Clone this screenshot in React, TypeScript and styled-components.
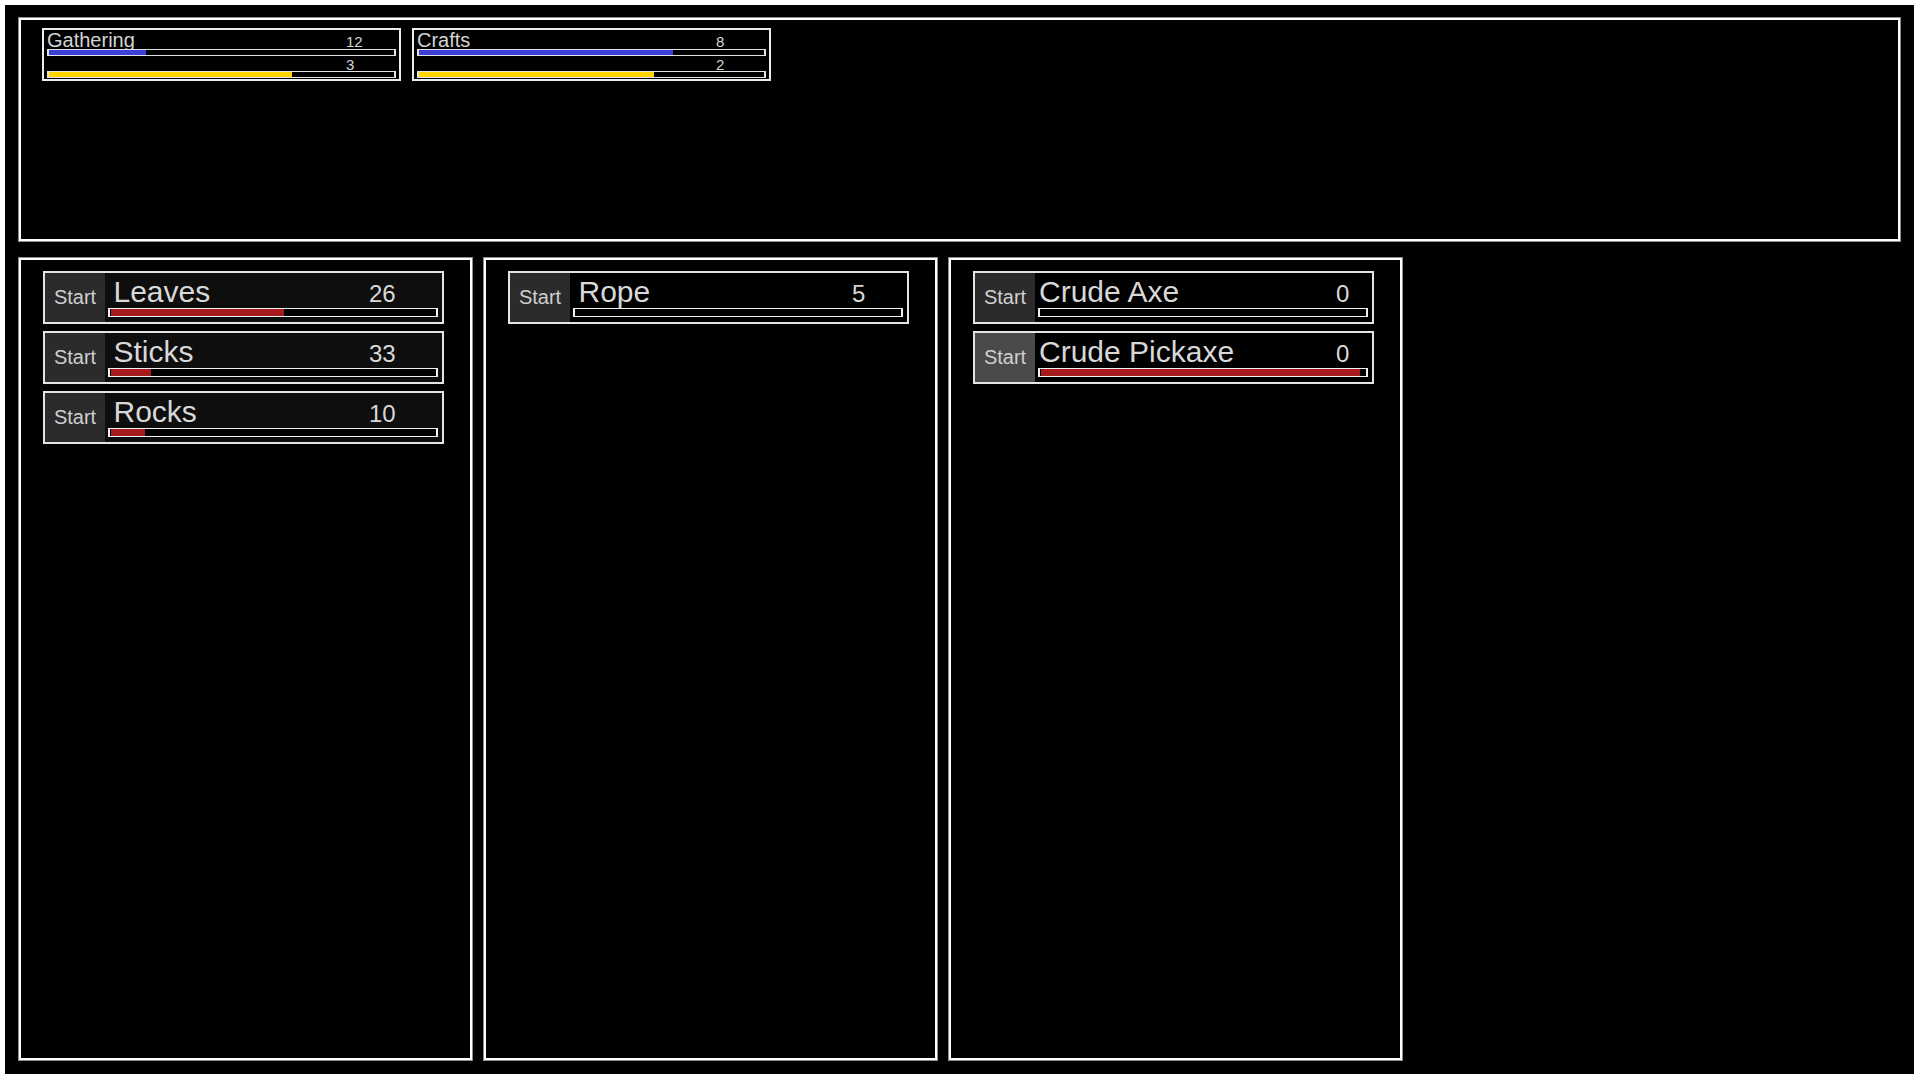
import React from "react";
import styled, { createGlobalStyle } from "styled-components";

const GlobalStyle = createGlobalStyle`
  html { background: #ffffff; }
  body {
    margin: 5px;
    font-family: "Liberation Sans", Arial, Helvetica, sans-serif;
  }
  * { box-sizing: border-box; }
`;

const Screen = styled.div`
  height: 1069px;
  background: #000;
  padding: 12px 13px 13px 13px;
  display: flex;
  flex-direction: column;
  gap: 15px;
`;

const TopPanel = styled.section`
  height: 225px;
  flex: 0 0 auto;
  border: 1px solid #8c8c8c;
  box-shadow: inset 0 0 0 2px #ffffff;
  padding: 10px 0 0 23px;
  display: flex;
  align-items: flex-start;
  gap: 11px;
`;

const SkillCard = styled.div`
  width: 359px;
  height: 53px;
  border: 2px solid #ececec;
  padding: 0 3px;
  display: flex;
  flex-direction: column;
`;

const SkillRow = styled.div<{ $h: number }>`
  height: ${(p) => p.$h}px;
  display: flex;
  align-items: baseline;
  color: #d4d4d4;
`;

const SkillName = styled.span`
  flex: 0 0 299px;
  font-size: 20px;
  line-height: 21px;
`;

const SkillValue = styled.span`
  font-size: 15px;
  line-height: 17px;
`;

const SkillBar = styled.div`
  height: 7px;
  border-style: solid;
  border-color: #e2e2e2;
  border-width: 1px 2px;
  background: #000;
  position: relative;
`;

const Fill = styled.div<{ $color: string }>`
  height: 100%;
  background: ${(p) => p.$color};
`;

const Columns = styled.div`
  flex: 1 1 auto;
  display: flex;
  gap: 10px;
`;

const Column = styled.section`
  width: 455px;
  height: 804px;
  border: 1px solid #8c8c8c;
  box-shadow: inset 0 0 0 2px #ffffff;
  padding: 13px 0 0 24px;
  display: flex;
  flex-direction: column;
  gap: 7px;
`;

const ItemCard = styled.div<{ $bg: string }>`
  width: 401px;
  height: 53px;
  border: 2px solid #e4e4e4;
  background: ${(p) => p.$bg};
  display: flex;
`;

const StartButton = styled.button<{ $lit: boolean }>`
  flex: 0 0 60px;
  height: 100%;
  border: none;
  margin: 0;
  padding: 0;
  background: ${(p) => (p.$lit ? "#4a4a4a" : "#2b2b2b")};
  color: #cfcfcf;
  font-family: "Liberation Sans", Arial, Helvetica, sans-serif;
  font-size: 20px;
  cursor: pointer;
`;

const ItemBody = styled.div`
  flex: 1 1 auto;
  padding: 0 4px 0 3px;
  display: flex;
  flex-direction: column;
`;

const ItemHeader = styled.div<{ $indent: number }>`
  height: 35px;
  padding-left: ${(p) => p.$indent}px;
  display: flex;
  align-items: baseline;
  color: #d8d8d8;
`;

const ItemName = styled.span<{ $w: number }>`
  flex: 0 0 ${(p) => p.$w}px;
  font-size: 30px;
  line-height: 37px;
  white-space: nowrap;
`;

const ItemValue = styled.span`
  font-size: 24px;
`;

const ItemBar = styled.div`
  height: 9px;
  border-style: solid;
  border-color: #f0f0f0;
  border-width: 1px 2px;
  padding: 0 1px;
  background: #000;
`;

type Skill = { name: string; level: number; xp: number; levelPct: number; xpPct: number };

const skills: Skill[] = [
  { name: "Gathering", level: 12, xp: 3, levelPct: 28, xpPct: 70.3 },
  { name: "Crafts", level: 8, xp: 2, levelPct: 73.5, xpPct: 68 },
];

type Item = { name: string; count: number; pct: number; lit?: boolean };
type Group = { indent: number; nameWidth: number; bg: string; items: Item[] };

const groups: Group[] = [
  {
    indent: 5.5,
    nameWidth: 255.5,
    bg: "#0e0e0e",
    items: [
      { name: "Leaves", count: 26, pct: 53.3 },
      { name: "Sticks", count: 33, pct: 12.3 },
      { name: "Rocks", count: 10, pct: 10.6 },
    ],
  },
  {
    indent: 5.5,
    nameWidth: 273.5,
    bg: "#000000",
    items: [{ name: "Rope", count: 5, pct: 0 }],
  },
  {
    indent: 1,
    nameWidth: 297,
    bg: "#000000",
    items: [
      { name: "Crude Axe", count: 0, pct: 0 },
      { name: "Crude Pickaxe", count: 0, pct: 98.6, lit: true },
    ],
  },
];

export default function App() {
  return (
    <>
      <GlobalStyle />
      <Screen>
        <TopPanel>
          {skills.map((s) => (
            <SkillCard key={s.name}>
              <SkillRow $h={19}>
                <SkillName>{s.name}</SkillName>
                <SkillValue>{s.level}</SkillValue>
              </SkillRow>
              <SkillBar>
                <Fill $color="#3c3fd8" style={{ width: `${s.levelPct}%` }} />
              </SkillBar>
              <SkillRow $h={15}>
                <SkillName />
                <SkillValue>{s.xp}</SkillValue>
              </SkillRow>
              <SkillBar>
                <Fill $color="#ffd400" style={{ width: `${s.xpPct}%` }} />
              </SkillBar>
            </SkillCard>
          ))}
        </TopPanel>
        <Columns>
          {groups.map((g, gi) => (
            <Column key={gi}>
              {g.items.map((it) => (
                <ItemCard key={it.name} $bg={g.bg}>
                  <StartButton $lit={!!it.lit}>Start</StartButton>
                  <ItemBody>
                    <ItemHeader $indent={g.indent}>
                      <ItemName $w={g.nameWidth}>{it.name}</ItemName>
                      <ItemValue>{it.count}</ItemValue>
                    </ItemHeader>
                    <ItemBar>
                      <Fill $color="#a81b1d" style={{ width: `${it.pct}%` }} />
                    </ItemBar>
                  </ItemBody>
                </ItemCard>
              ))}
            </Column>
          ))}
        </Columns>
      </Screen>
    </>
  );
}
